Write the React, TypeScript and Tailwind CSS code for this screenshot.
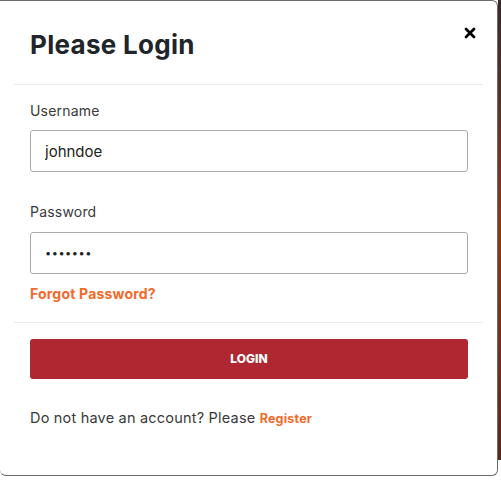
import { X } from "lucide-react";

const font = { fontFamily: "Inter, 'Noto Sans', sans-serif" };

export default function App() {
  return (
    <div className="flex h-[482px] w-[501px] bg-white" style={font}>
      <div className="flex h-[476px] w-[498px] flex-col rounded-b-md rounded-tr-md border-y border-r border-[#6b6b6b] bg-white">
        <div className="mx-[14px] flex items-start justify-between border-b border-[#e9ecef] pb-[22px] pl-4 pr-[5px] pt-[27px]">
          <h2 className="text-[26px] leading-[34px] font-bold tracking-[0.3px] text-[#212529]">Please Login</h2>
          <button className="mt-[-3px] text-black" aria-label="Close">
            <X className="h-[16px] w-[16px]" strokeWidth={4} />
          </button>
        </div>

        <form className="mx-[14px] border-b border-[#e9ecef] pl-4 pr-[15px] pt-[16px] pb-[18px]">
          <label className="block text-[14px] leading-5 tracking-[0.2px] text-[#3a3a3a]">Username</label>
          <input
            className="mt-[9px] h-[42px] w-full rounded-[3px] border border-[#aaaaaa] px-[14px] text-[15px] text-[#222] outline-none"
            defaultValue="johndoe"
          />
          <label className="mt-[30px] block text-[14px] leading-5 tracking-[0.2px] text-[#3a3a3a]">Password</label>
          <input
            className="mt-[10px] h-[42px] w-full rounded-[3px] border border-[#aaaaaa] px-[14px] text-[11px] tracking-[0.5px] text-[#222] outline-none"
            defaultValue="1234567"
            type="password"
          />
          <a className="mt-[10px] block text-[14px] leading-5 font-bold tracking-[0.2px] text-[#f26a2a]" href="#">
            Forgot Password?
          </a>
        </form>

        <div className="pl-[30px] pr-[29px] pt-[16px]">
          <button className="h-[40px] w-full rounded-[3px] bg-[#af2730] text-[12px] font-extrabold text-white">
            LOGIN
          </button>
          <p className="mt-[29px] text-[14.5px] leading-5 tracking-[0.2px] text-[#3a3a3a]">
            Do not have an account? Please{" "}
            <a className="text-[12.5px] font-bold text-[#f26a2a]" href="#">
              Register
            </a>
          </p>
        </div>
      </div>
      <div className="h-[460px] w-[3px] bg-gradient-to-b from-[#3a2a28] via-[#8a3a12] to-[#5a2a18]" />
    </div>
  );
}
